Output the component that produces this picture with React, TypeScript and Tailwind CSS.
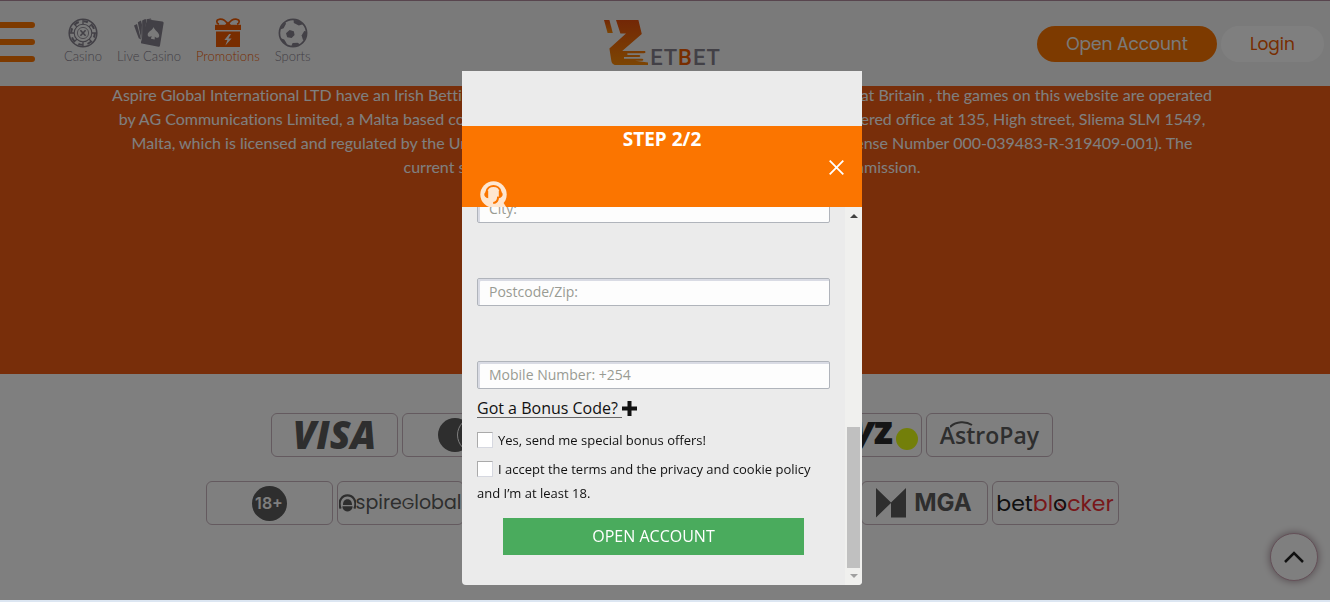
import React from 'react';

const ChipIcon = () => (
  <svg width="30" height="30" viewBox="0 0 30 30" fill="none" stroke="currentColor">
    <circle cx="15" cy="15" r="13.8" strokeWidth="1.6" />
    <circle cx="15" cy="15" r="11.8" strokeWidth="2" strokeDasharray="4.6 4.67" />
    <circle cx="15" cy="15" r="8.8" strokeWidth="1.1" />
    <circle cx="15" cy="15" r="5.6" strokeWidth="0.8" />
    <path
      d="M15 6.2V1.5M15 28.5v-4.7M6.2 15H1.5M28.5 15h-4.7M8.8 8.8 5.4 5.4M24.6 24.6l-3.4-3.4M8.8 21.2l-3.4 3.4M24.6 5.4l-3.4 3.4"
      strokeWidth="1.3"
    />
    <path d="m12.4 12.2 5.2 5.6M17.6 12.2l-5.2 5.6" strokeWidth="1.6" />
  </svg>
);

const CardsIcon = () => (
  <svg width="32" height="30" viewBox="0 0 32 30" fill="currentColor">
    <path d="M1 7.5 4 6l4 15.5-2.3-1.3z" />
    <path d="M4.8 4.2 8 2.6l1 3.8-.6 15.4z" />
    <path d="m9.2 2.4 3-1.4 1.2.8-2.6 20.4-1.6 2z" />
    <path d="m13.6 1.2 4.2-.6.8.8-5 .8z" />
    <path
      fillRule="evenodd"
      d="M13.8 2.6c.1-.8.8-1.3 1.6-1.2l14 2.2c.8.1 1.3.8 1.2 1.6L27 27.6c-.1.8-.8 1.3-1.6 1.2L9 25.6c-.8-.1-1.2-.8-1-1.6zM20.6 9c-.7 3.2-5.6 4.3-5.9 7.4-.3 2.2 2.4 3.2 4 1.6l-.8 2.8 3.8.6.1-2.9c1.2 1.9 4.1 1.7 4.4-.6.5-3.1-4.9-5.6-5.6-8.9z"
    />
  </svg>
);

const GiftIcon = () => (
  <svg width="26" height="30" viewBox="0 0 26 30" fill="currentColor">
    <path
      d="M12.8 6C10 2 6.6.8 4 1.4 1 2 1.2 5.6 4 6.2M13.2 6c2.8-4 6.2-5.2 8.8-4.6 3 .6 2.8 4.2 0 4.8"
      fill="none"
      stroke="currentColor"
      strokeWidth="1.7"
    />
    <path d="M13 3.6 10 7h6z" />
    <path d="M0 6.8h26V12H0z" />
    <path fillRule="evenodd" d="M1 13.6h24V29H1zM14.2 16l-4.8 6h3l-2 5.4 6.2-6.8h-3.2l2.6-4.6z" />
  </svg>
);

const BallIcon = () => (
  <svg width="30" height="30" viewBox="0 0 30 30">
    <circle cx="15" cy="15" r="13.6" fill="none" stroke="currentColor" strokeWidth="1.7" />
    <g fill="currentColor">
      <path d="m11.6 12 4.2 1.2.8 3.8-3 3-4.4-.8-1.2-4z" />
      <path d="M15.6 2c4-.2 7.8 1.6 9.4 4.2l-4.2 1.2-5-2.4z" />
      <path d="m28.6 13.4-.4 5.6-3 3.6-1.6-5.2 2.6-4.4z" />
      <path d="m3.4 8.6 3.8-4.4.8 1.6-2.4 4.4-3.4 1.2z" />
      <path d="m2.8 20.2 3.4 1.2 2.6 4.4-.8.8-3.4-3z" />
      <path d="m14.6 25 5-.2 2.4 1.4-4.6 2.2-4-.6z" />
    </g>
  </svg>
);

const SupportIcon = () => (
  <svg width="28" height="28" viewBox="0 0 28 28">
    <path d="M22 19.5 27.4 28l-9.8-2z" fill="#fee6d0" />
    <circle cx="13.5" cy="13.5" r="13.2" fill="#fee6d0" />
    <path d="M6.4 11C7.4 3 19.6 3 20.6 11" fill="none" stroke="#fb7500" strokeWidth="2" />
    <path d="M8.2 9.8v7.4c-5.2-.8-5.2-6.6 0-7.4zM18.8 9.8v7.4c5.2-.8 5.2-6.6 0-7.4z" fill="#fb7500" />
    <path d="M18.2 15.6c-.2 3.8-1.8 6.2-5 6.4" fill="none" stroke="#fb7500" strokeWidth="2" />
  </svg>
);

const ZetbetMark = () => (
  <svg width="46" height="47" viewBox="0 0 46 47">
    <defs>
      <linearGradient id="mark" x1="0" y1="0" x2="0" y2="1">
        <stop offset="0" stopColor="#e64f0c" />
        <stop offset="1" stopColor="#f98a06" />
      </linearGradient>
    </defs>
    <g fill="url(#mark)">
      <path d="M0 1h5.4l3.4 13H3.6z" />
      <path d="M12 1h22.4l3.4 14-19.6 17H40c2 0 2 2.2 0 2.2H23.4V36H35c1.8 0 1.8 2 0 2H20v1.8h18c1.8 0 1.8 2 0 2H31l13 1.8V46H12C8.6 46 7.6 43.6 7.2 41L5.4 29.4 22 14.6h-5.6z" />
    </g>
  </svg>
);

const navItems = [
  { label: 'Casino', icon: <ChipIcon />, active: false },
  { label: 'Live Casino', icon: <CardsIcon />, active: false },
  { label: 'Promotions', icon: <GiftIcon />, active: true },
  { label: 'Sports', icon: <BallIcon />, active: false },
];

const Header: React.FC = () => (
  <header className="fixed inset-x-0 top-0 z-10 grid h-[86px] grid-cols-[1fr_auto_1fr] border-t border-[#b08a9c] bg-[#f5f5f5] pr-1.5">
    <div className="flex items-start">
      <button aria-label="Menu" className="mt-[21px] flex w-9 flex-col gap-[11px] pr-px">
        <span className="h-1.5 rounded-r-full bg-[#fb7500]" />
        <span className="h-1.5 rounded-r-full bg-[#fb7500]" />
        <span className="h-1.5 rounded-r-full bg-[#fb7500]" />
      </button>
      <nav className="mt-[17px] ml-7 flex gap-[15px] font-[Lato] text-[13px] leading-4 font-light [font-variant-ligatures:none]">
        {navItems.map((item) => (
          <a
            key={item.label}
            href="#"
            className={item.active ? 'flex flex-col items-center text-[#f05a00]' : 'flex flex-col items-center text-[#85808c]'}
          >
            {item.icon}
            {item.label}
          </a>
        ))}
      </nav>
    </div>
    <a href="#" aria-label="Zetbet" className="mt-[18px] flex items-end self-start font-[Roboto] text-[22px] leading-4 font-medium text-[#85808c]">
      <ZetbetMark />
      <span className="flex gap-px">
        <span>E</span>
        <span>T</span>
        <span className="text-[#f05a00]">B</span>
        <span>E</span>
        <span>T</span>
      </span>
    </a>
    <div className="mt-[25px] flex items-start justify-end gap-1 font-[Poppins,Inter] text-[17px]">
      <button className="h-9 w-[180px] rounded-full bg-[#fb7500] pt-0.5 text-[#f5f5f5]">Open Account</button>
      <button className="h-9 w-[103px] rounded-full bg-white pt-0.5 text-[#f05a00]">Login</button>
    </div>
  </header>
);

const LegalText: React.FC = () => (
  <section className="min-h-[291px] bg-[#f05c14] pr-1.5 text-center font-[Lato] text-base leading-6 whitespace-nowrap text-white [font-variant-ligatures:none]">
    <p>
      Aspire Global International LTD have an Irish Betting License (numbers 1014667). For any customers in Great Britain , the games on this website are operated
      <br />
      by AG Communications Limited, a Malta based company (company numbers C48328), and having its registered office at 135, High street, Sliema SLM 1549,
      <br />
      Malta, which is licensed and regulated by the United Kingdom Gambling Commission (account 3948, License Number 000-039483-R-319409-001). The
      <br />
      current status of the operator's license is on the pages of the Commission.
    </p>
  </section>
);

const Badge: React.FC<{ children?: React.ReactNode }> = ({ children }) => (
  <li className="flex h-11 w-[127px] shrink-0 items-center justify-center rounded-md border border-[#c8b4be] whitespace-nowrap text-[#5c5c5c]">
    {children}
  </li>
);

const Footer: React.FC = () => (
  <footer className="flex grow flex-col gap-6 bg-white pt-[39px] pr-1.5">
    <ul className="flex justify-center gap-1">
      <Badge>
        <span className="pb-0.5 font-['Open_Sans'] text-[38px] leading-10 font-extrabold italic">VISA</span>
      </Badge>
      <Badge>
        <svg width="58" height="36" viewBox="0 0 58 36">
          <circle cx="18" cy="18" r="17" fill="#5c5c5c" />
          <circle cx="38" cy="18" r="17.5" fill="#5c5c5c" stroke="#fff" />
        </svg>
      </Badge>
      <Badge />
      <Badge />
      <Badge>
        <span className="flex w-full items-center justify-end gap-[3px] pr-[3px]">
          <span className="pb-3 font-['Open_Sans'] text-[38px] leading-9 font-extrabold text-[#2a2a2a]">
            <i>pay</i>z
          </span>
          <span className="mt-2 size-[22px] rounded-full bg-[#e6ff14]" />
        </span>
      </Badge>
      <Badge>
        <span className="relative font-['Open_Sans'] text-[23px] leading-9 font-semibold">
          AstroPay
          <svg className="absolute top-1 left-2.5" width="24" height="8" viewBox="0 0 24 8">
            <path d="M0 6C6 0 16 0 22 4" fill="none" stroke="currentColor" strokeWidth="2" />
          </svg>
        </span>
      </Badge>
    </ul>
    <ul className="flex justify-center gap-1">
      <Badge>
        <span className="flex size-[35px] items-center justify-center rounded-full bg-[#5c5c5c] font-[Inter] text-base font-semibold text-white">
          18+
        </span>
      </Badge>
      <Badge>
        <svg width="17" height="18" viewBox="0 0 17 18">
          <path d="M1.6 14.6C-1.6 6.6 3.4 1.4 8.5 1.4s10.1 5.2 6.9 13.2" fill="none" stroke="currentColor" strokeWidth="2.2" />
          <path d="M4 10.6C4 3.4 13 3.4 13 10.6V11H4zM3.4 12.2h10.2c0 7-10.2 7-10.2 0z" fill="currentColor" />
        </svg>
        <span className="font-[Poppins,Lato] text-[19px]">
          spire<span className="text-base">G</span>lobal
        </span>
      </Badge>
      <Badge />
      <Badge />
      <Badge />
      <Badge>
        <span className="flex items-center gap-2 font-[Inter] text-2xl font-bold">
          <svg width="30" height="30" viewBox="0 0 30 30" fill="currentColor">
            <path d="M0 0 15 14.6 30 0v29.4H15V15L0 29.4z" />
          </svg>
          MGA
        </span>
      </Badge>
      <Badge>
        <span className="font-[Poppins,Lato] text-[22px] text-[#f03035]">
          <span className="text-[#202020]">bet</span>bl
          <span className="relative text-[#202020]">
            o
            <svg className="absolute top-3.5 left-1" width="7" height="7" viewBox="0 0 7 7">
              <path d="m1 1 5 5" stroke="#f03035" strokeWidth="2" />
            </svg>
          </span>
          cker
        </span>
      </Badge>
    </ul>
  </footer>
);

const fields = [
  { id: 'city', label: 'City:' },
  { id: 'postcode', label: 'Postcode/Zip:' },
  { id: 'mobile', label: 'Mobile Number: +254' },
];

const RegisterDialog: React.FC = () => (
  <div
    role="dialog"
    aria-label="Open account"
    className="flex h-[514px] w-[400px] flex-col overflow-hidden rounded-b bg-[#ebebeb] pt-[55px] font-['Open_Sans']"
  >
    <div className="flex h-[81px] shrink-0 flex-col bg-[#fb7500] px-[18px] text-white">
      <h2 className="text-center text-[19px] leading-[26px] font-bold">STEP 2/2</h2>
      <button aria-label="Close" className="mt-2 self-end">
        <svg width="15" height="15" viewBox="0 0 15 15" stroke="currentColor" strokeWidth="1.8">
          <path d="m.7.7 13.6 13.6M14.3.7.7 14.3" />
        </svg>
      </button>
      <button aria-label="Live support" className="mt-1.5 self-start">
        <SupportIcon />
      </button>
    </div>
    <div className="flex min-h-0 grow overflow-hidden">
      <form className="flex grow flex-col justify-end px-[15px] pb-[30px] text-[#111]">
        <div className="flex flex-col gap-[55px]">
          {fields.map((field) => (
            <input
              key={field.id}
              aria-label={field.label}
              placeholder={field.label}
              className="h-7 w-full rounded-xs border border-[#b0b4bb] bg-[#fdfdfd] px-[11px] pb-px text-sm shadow-[inset_2px_2px_0_#d9dbe4] placeholder:text-[#999b93]"
            />
          ))}
        </div>
        <a href="#" className="mt-2.5 flex items-center self-start leading-6">
          <span className="border-b border-[#666] pr-1 leading-[18px]">Got a Bonus Code?</span>
          <svg width="15" height="15" viewBox="0 0 15 15" fill="currentColor">
            <path d="M5.5 0h4v5.5H15v4H9.5V15h-4V9.5H0v-4h5.5z" />
          </svg>
        </a>
        <label className="mt-2.5 text-[13px] leading-6">
          <input type="checkbox" className="mr-[5px] mb-1 size-4 appearance-none border border-[#d6d8e0] border-t-[#aaa] border-l-[#aaa] bg-white align-middle" />
          Yes, send me special bonus offers!
        </label>
        <label className="mt-[5px] text-[13px] leading-6">
          <input type="checkbox" className="mr-[5px] mb-1 size-4 appearance-none border border-[#d6d8e0] border-t-[#aaa] border-l-[#aaa] bg-white align-middle" />
          I accept the terms and the privacy and cookie policy and I’m at least 18.
        </label>
        <button type="button" className="mx-[26px] mt-[13px] h-[37px] shrink-0 bg-[#4aab5d] pb-0.5 text-base text-white">
          OPEN ACCOUNT
        </button>
      </form>
      {/* scroll track */}
      <div className="flex w-[17px] shrink-0 flex-col items-center justify-between bg-[#f0f0ee] pt-[7px]">
        <svg width="8" height="4" viewBox="0 0 8 4">
          <path d="M0 4 4 0l4 4z" fill="#404040" />
        </svg>
        <div className="flex flex-col items-center gap-1.5 pb-[7px]">
          <div className="h-[141px] w-[13px] bg-[#c0c0c0]" />
          <svg width="8" height="4" viewBox="0 0 8 4">
            <path d="m0 0 4 4 4-4z" fill="#a0a0a0" />
          </svg>
        </div>
      </div>
    </div>
  </div>
);

export default function App() {
  return (
    <div className="flex min-h-screen flex-col overflow-x-hidden bg-[#dce6f2] pt-[83px] pb-0.5">
      <Header />
      <LegalText />
      <Footer />
      <button
        aria-label="Back to top"
        className="fixed right-3 bottom-[21px] z-10 flex size-12 items-center justify-center rounded-full border border-[#c8a0b0] bg-white shadow-[0_0_8px_#a08c94]"
      >
        <svg width="20" height="12" viewBox="0 0 20 12" fill="none" stroke="#222" strokeWidth="2.5">
          <path d="m1 11 9-9 9 9" />
        </svg>
      </button>
      <div className="fixed inset-x-0 top-0 bottom-0.5 z-20 flex items-start justify-center bg-black/50 pt-[71px] pr-1.5">
        <RegisterDialog />
      </div>
    </div>
  );
}
